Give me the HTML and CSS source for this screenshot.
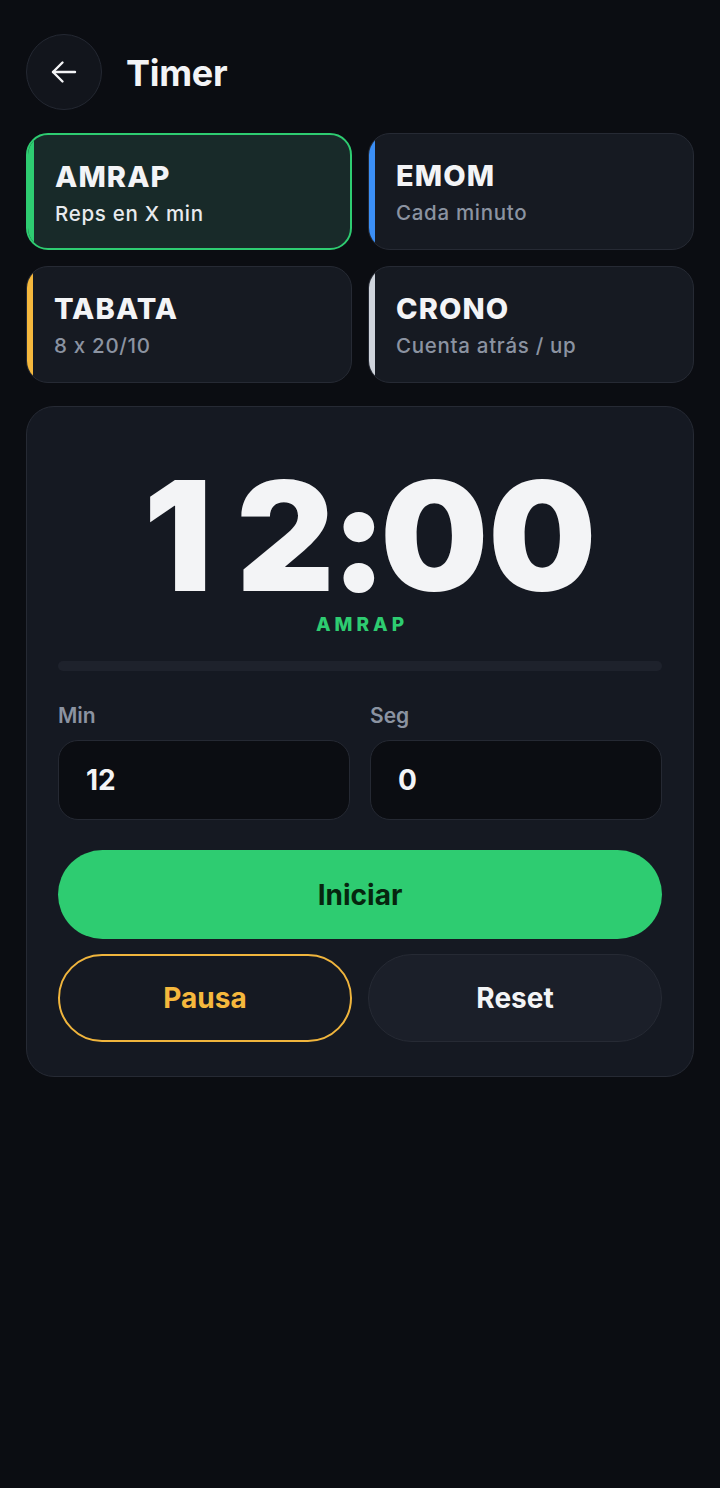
FILE: index.html
```html
<!DOCTYPE html>
<html lang="es">
  <head>
    <meta charset="UTF-8" />
    <title>Timer</title>
    <link rel="stylesheet" href="styles.css">
  </head>
  <body>
    <div class="page">
      <header class="top">
        <button class="back" aria-label="Volver">
          <svg width="28" height="28" viewBox="0 0 28 28" fill="none" stroke="#f3f4f6" stroke-width="2.4" stroke-linecap="round" stroke-linejoin="round">
            <path d="M25 14H3" />
            <path d="M12.5 4.5L3 14l9.5 9.5" />
          </svg>
        </button>
        <h1>Timer</h1>
      </header>

      <div class="modes">
        <div class="mode active green">
          <div class="mode-title">AMRAP</div>
          <div class="mode-sub">Reps en X min</div>
        </div>
        <div class="mode blue">
          <div class="mode-title">EMOM</div>
          <div class="mode-sub">Cada minuto</div>
        </div>
        <div class="mode yellow">
          <div class="mode-title">TABATA</div>
          <div class="mode-sub">8 x 20/10</div>
        </div>
        <div class="mode grey">
          <div class="mode-title">CRONO</div>
          <div class="mode-sub">Cuenta atrás / up</div>
        </div>
      </div>

      <div class="panel">
        <!-- digits spaced like a tabular display face -->
        <div class="clock"><span class="d-one">1</span><span class="d-two">2</span><span class="d-sep">:</span>00</div>
        <div class="clock-mode">AMRAP</div>
        <div class="progress"><div class="progress-fill" style="width: 0%"></div></div>

        <div class="fields">
          <div>
            <label>Min</label>
            <input type="number" value="12" />
          </div>
          <div>
            <label>Seg</label>
            <input type="number" value="0" />
          </div>
        </div>

        <button class="btn start">Iniciar</button>
        <div class="btn-row">
          <button class="btn pause">Pausa</button>
          <button class="btn reset">Reset</button>
        </div>
      </div>
    </div>
  </body>
</html>
```

FILE: styles.css
```css
body {
  margin: 0;
  background: #0b0d12;
  font-family: "Inter", "Roboto", sans-serif;
  color: #f3f4f6;
}
.page {
  padding: 34px 26px;
}
.top {
  display: flex;
  align-items: center;
  gap: 24px;
}
.back {
  width: 76px;
  height: 76px;
  border-radius: 50%;
  background: #12151c;
  border: 1px solid #242832;
  display: flex;
  align-items: center;
  justify-content: center;
  padding: 0;
}
h1 {
  margin: 0;
  padding-top: 2px;
  font-size: 36px;
  font-weight: 700;
  letter-spacing: -0.3px;
}
.modes {
  margin-top: 23px;
  display: grid;
  grid-template-columns: 1fr 1fr;
  gap: 16px;
}
.mode {
  height: 117px;
  box-sizing: border-box;
  border-radius: 22px;
  background: #161a22;
  border: 1.5px solid #262a34;
  padding: 24px 0 0 27px;
  overflow: hidden;
  position: relative;
}
.mode::before {
  content: "";
  position: absolute;
  left: 0;
  top: 0;
  bottom: 0;
  width: 6px;
}
.green::before { background: #2ecc71; }
.blue::before { background: #3b8ff6; }
.yellow::before { background: #f5b83d; }
.grey::before { background: #cfd4dc; }
.mode.active {
  background: #182a29;
  border: 2px solid #2ecc71;
}
.mode-title {
  font-size: 29px;
  font-weight: 800;
  letter-spacing: 1.1px;
  color: #f3f4f6;
}
.mode-sub {
  margin-top: 7px;
  font-size: 20.5px;
  font-weight: 500;
  letter-spacing: 0.7px;
  font-feature-settings: "calt" 0;
  color: #8b93a1;
}
.mode.active .mode-sub {
  color: #e8eaee;
}
.panel {
  margin-top: 23px;
  background: #151922;
  border: 1.5px solid #262a34;
  border-radius: 28px;
  padding: 53px 31px 34px;
}
.clock {
  text-align: center;
  font-size: 152px;
  font-weight: 900;
  line-height: 1;
  letter-spacing: 0;
  padding-left: 20px;
  font-feature-settings: "calt" 0;
  color: #f3f4f6;
}
.d-one {
  letter-spacing: 24px;
}
.d-two {
  letter-spacing: -4px;
}
.d-sep {
  letter-spacing: -7px;
}
.clock-mode {
  text-align: center;
  margin-top: 3px;
  font-size: 19px;
  line-height: 1;
  font-weight: 800;
  letter-spacing: 4px;
  padding-left: 4px;
  color: #2ecc71;
}
.progress {
  margin-top: 27px;
  height: 10px;
  border-radius: 5px;
  background: #1e222c;
  overflow: hidden;
}
.progress-fill {
  height: 100%;
  background: #2ecc71;
}
.fields {
  margin-top: 32px;
  display: grid;
  grid-template-columns: 1fr 1fr;
  gap: 20px;
}
label {
  display: block;
  font-size: 21px;
  font-weight: 600;
  color: #8b93a1;
}
input {
  margin-top: 12px;
  width: 100%;
  box-sizing: border-box;
  height: 80px;
  padding: 0 27px;
  border-radius: 20px;
  background: #0b0d12;
  border: 1.5px solid #252933;
  color: #f3f4f6;
  font-family: "Inter", sans-serif;
  font-size: 28px;
  font-weight: 700;
  outline: none;
  -moz-appearance: textfield;
}
input::-webkit-inner-spin-button,
input::-webkit-outer-spin-button {
  -webkit-appearance: none;
  margin: 0;
}
.btn {
  font-family: "Inter", sans-serif;
  font-size: 28px;
  font-weight: 700;
  border-radius: 999px;
  cursor: pointer;
  width: 100%;
}
.start {
  margin-top: 30px;
  height: 89px;
  background: #2ecc71;
  border: none;
  color: #06260f;
}
.btn-row {
  margin-top: 15px;
  display: grid;
  grid-template-columns: 1fr 1fr;
  gap: 16px;
}
.pause {
  height: 88px;
  background: transparent;
  border: 2px solid #f0b53d;
  color: #f5b83d;
}
.reset {
  height: 88px;
  background: #1b1f29;
  border: 1.5px solid #262a34;
  color: #f3f4f6;
}
```
